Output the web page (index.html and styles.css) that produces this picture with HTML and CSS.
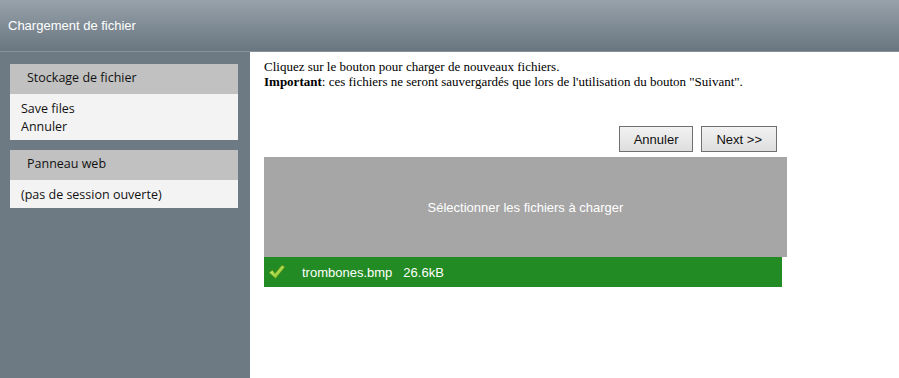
FILE: index.html
```html
<!DOCTYPE html>
<html lang="fr">
<head>
  <meta charset="UTF-8">
  <title>Chargement de fichier</title>
  <link rel="stylesheet" href="styles.css">
</head>
<body>
  <div class="entete">Chargement de fichier</div>
  <div class="page">
    <div class="colonne-gauche">
      <div class="panneau">
        <div class="panneau-titre">Stockage de fichier</div>
        <div class="panneau-corps">
          <div>Save files</div>
          <div>Annuler</div>
        </div>
      </div>
      <div class="panneau">
        <div class="panneau-titre">Panneau web</div>
        <div class="panneau-corps">
          <div>(pas de session ouverte)</div>
        </div>
      </div>
    </div>
    <div class="contenu">
      <div class="consigne">
        Cliquez sur le bouton pour charger de nouveaux fichiers.<br>
        <b>Important</b>: ces fichiers ne seront sauvergardés que lors de l'utilisation du bouton "Suivant".
      </div>
      <div class="boutons">
        <button class="btn">Annuler</button>
        <button class="btn">Next &gt;&gt;</button>
      </div>
      <div class="zone-depot">Sélectionner les fichiers à charger</div>
      <div class="fichier-ok">
        <svg class="coche" width="18" height="16" viewBox="0 0 18 16">
          <defs>
            <linearGradient id="vert" x1="0" y1="0" x2="1" y2="1">
              <stop offset="0" stop-color="#d6f27a"/>
              <stop offset="1" stop-color="#7cc21e"/>
            </linearGradient>
          </defs>
          <path d="M1 8.5 L4.5 6 L7 9.5 L14 1 L17 3 L7.5 14.5 Z" fill="url(#vert)" stroke="#4f8a12" stroke-width="0.8" stroke-linejoin="round"/>
        </svg>
        <span class="nom">trombones.bmp</span>
        <span>26.6kB</span>
      </div>
    </div>
  </div>
</body>
</html>
```

FILE: styles.css
```css
html, body {
  margin: 0;
  height: 100%;
}
body {
  font-family: 'Liberation Sans', Arial, sans-serif;
  background: #fff;
  overflow: hidden;
}
.entete {
  height: 51px;
  line-height: 51px;
  padding-left: 8px;
  color: #fff;
  font-size: 13px;
  background: linear-gradient(#97a2ab, #69757f);
  border-bottom: 1px solid #86919a;
}
.page {
  display: flex;
  height: calc(100% - 52px);
}
.colonne-gauche {
  width: 228px;
  padding: 12px 12px 0 10px;
  background: #6d7a84;
  font-family: 'Open Sans', 'Noto Sans', sans-serif;
  font-size: 12.5px;
  color: #111;
}
.panneau {
  margin-bottom: 10px;
}
.panneau-titre {
  background: #c1c1c1;
  height: 30px;
  line-height: 28px;
  padding-left: 17px;
}
.panneau-corps {
  background: #f3f3f3;
  padding: 6px 11px 4px;
  line-height: 18px;
}
.contenu {
  flex: 1;
  padding: 7px 0 0 14px;
}
.consigne {
  font-family: 'Liberation Serif', 'Times New Roman', serif;
  font-size: 13px;
  line-height: 15px;
  color: #000;
}
.boutons {
  width: 513px;
  display: flex;
  justify-content: flex-end;
  gap: 8px;
  margin-top: 37px;
}
.btn {
  font-family: 'Liberation Sans', Arial, sans-serif;
  font-size: 13px;
  height: 26px;
  padding: 0 14px;
  background: linear-gradient(#f2f2f2, #dedede);
  border: 1px solid #707070;
  color: #111;
}
.zone-depot {
  width: 523px;
  height: 100px;
  margin-top: 5px;
  background: #a6a6a6;
  color: #fff;
  font-size: 13px;
  display: flex;
  align-items: center;
  justify-content: center;
}
.fichier-ok {
  width: 518px;
  height: 30px;
  background: #238b23;
  color: #fff;
  font-size: 13px;
  display: flex;
  align-items: center;
}
.coche {
  margin: 0 16px 0 4px;
}
.nom {
  margin-right: 11px;
}
```
